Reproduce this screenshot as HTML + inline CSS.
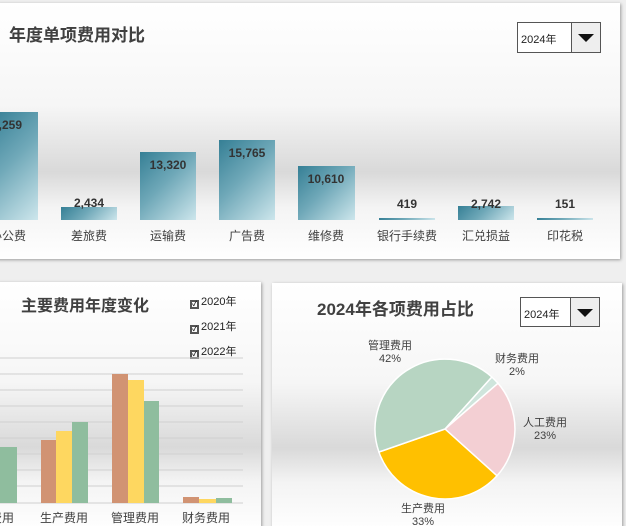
<!DOCTYPE html>
<html><head><meta charset="utf-8"><style>
*{margin:0;padding:0;box-sizing:border-box}
html,body{width:626px;height:526px;overflow:hidden}
body{background:#efefef;position:relative;font-family:"Liberation Sans","Noto Sans CJK SC",sans-serif;color:#404040}
.panel{position:absolute;background:linear-gradient(#fff 0%,#f6f6f6 40%,#d9d9d9 66%,#f4f4f4 80%,#fff 100%);box-shadow:1px 1px 3px rgba(0,0,0,.35)}
.t{position:absolute;font-weight:bold;color:#404040;white-space:nowrap}
.dd{position:absolute;background:#fff;border:1px solid #555;font-size:11px;color:#222}
.dd span{position:absolute;left:3px;top:8px}
.dd i{position:absolute;right:0;top:0;bottom:0;width:29px;border-left:1px solid #555;background:#eee}
.dd i:after{content:"";position:absolute;left:6px;top:11px;border-left:8px solid transparent;border-right:8px solid transparent;border-top:8px solid #111}
.bar{position:absolute;background:linear-gradient(135deg,#357f95 0%,#6fa8b8 45%,#cde6ec 100%)}
.v{position:absolute;font-size:12px;font-weight:bold;color:#333;width:60px;text-align:center;margin-left:-2px}
.l{position:absolute;font-size:12px;color:#404040;width:80px;text-align:center;white-space:nowrap}
.cb{position:absolute;font-size:11px;color:#222;white-space:nowrap}
.cb b{display:inline-block;width:9px;height:9px;border:2px solid #555;margin-right:2px;vertical-align:-1px;font-size:7px;line-height:5px;text-align:center}
</style></head><body>
<div class="panel" style="left:-4px;top:3px;width:624px;height:256px"></div>
<div class="t" style="left:9px;top:21px;font-size:17px">年度单项费用对比</div>
<div class="dd" style="left:517px;top:22px;width:84px;height:31px"><span>2024年</span><i></i></div>
<div class="bar" style="left:-10px;top:112px;width:48px;height:108px"></div><div class="v" style="left:-24px;top:118px">11,259</div>
<div class="bar" style="left:61px;top:207px;width:56px;height:13px"></div><div class="v" style="left:61px;top:196px">2,434</div>
<div class="bar" style="left:140px;top:152px;width:56px;height:68px"></div><div class="v" style="left:140px;top:158px">13,320</div>
<div class="bar" style="left:219px;top:140px;width:56px;height:80px"></div><div class="v" style="left:219px;top:146px">15,765</div>
<div class="bar" style="left:298px;top:166px;width:57px;height:54px"></div><div class="v" style="left:298px;top:172px">10,610</div>
<div class="bar" style="left:379px;top:218px;width:56px;height:2px"></div><div class="v" style="left:379px;top:197px">419</div>
<div class="bar" style="left:458px;top:206px;width:56px;height:14px"></div><div class="v" style="left:458px;top:197px">2,742</div>
<div class="bar" style="left:537px;top:218px;width:56px;height:2px"></div><div class="v" style="left:537px;top:197px">151</div>
<div class="l" style="left:-32px;top:227px">办公费</div>
<div class="l" style="left:49px;top:227px">差旅费</div>
<div class="l" style="left:128px;top:227px">运输费</div>
<div class="l" style="left:207px;top:227px">广告费</div>
<div class="l" style="left:286px;top:227px">维修费</div>
<div class="l" style="left:367px;top:227px">银行手续费</div>
<div class="l" style="left:446px;top:227px">汇兑损益</div>
<div class="l" style="left:525px;top:227px">印花税</div>

<div class="panel" style="left:-4px;top:282px;width:265px;height:250px"></div>
<div class="t" style="left:21px;top:292px;font-size:16px">主要费用年度变化</div>
<div class="cb" style="left:190px;top:293px"><b>✓</b>2020年</div>
<div class="cb" style="left:190px;top:318px"><b>✓</b>2021年</div>
<div class="cb" style="left:190px;top:343px"><b>✓</b>2022年</div>
<svg style="position:absolute;left:0;top:350px" width="260" height="160">
<g stroke="#d0d0d0" stroke-width="1">
<line x1="0" y1="8" x2="243" y2="8"/><line x1="0" y1="24" x2="243" y2="24"/><line x1="0" y1="40" x2="243" y2="40"/><line x1="0" y1="56" x2="243" y2="56"/><line x1="0" y1="72" x2="243" y2="72"/><line x1="0" y1="88" x2="243" y2="88"/><line x1="0" y1="104" x2="243" y2="104"/><line x1="0" y1="120" x2="243" y2="120"/><line x1="0" y1="136" x2="243" y2="136"/><line x1="0" y1="153" x2="243" y2="153"/></g>
<rect x="0" y="97" width="17" height="56" fill="#8fbd9e"/>
<rect x="41" y="90" width="15" height="63" fill="#d19373"/><rect x="56" y="81" width="16" height="72" fill="#fed760"/><rect x="72" y="72" width="16" height="81" fill="#8fbd9e"/>
<rect x="112" y="24" width="16" height="129" fill="#d19373"/><rect x="128" y="30" width="16" height="123" fill="#fed760"/><rect x="144" y="51" width="15" height="102" fill="#8fbd9e"/>
<rect x="183" y="147" width="16" height="6" fill="#d19373"/><rect x="199" y="149" width="17" height="4" fill="#fed760"/><rect x="216" y="148" width="16" height="5" fill="#8fbd9e"/>
</svg>
<div class="l" style="left:-50px;top:509px">销售费用</div>
<div class="l" style="left:24px;top:509px">生产费用</div>
<div class="l" style="left:95px;top:509px">管理费用</div>
<div class="l" style="left:166px;top:509px">财务费用</div>

<div class="panel" style="left:272px;top:283px;width:350px;height:250px"></div>
<div class="t" style="left:317px;top:295px;font-size:17px">2024年各项费用占比</div>
<div class="dd" style="left:520px;top:297px;width:80px;height:30px"><span>2024年</span><i></i></div>
<svg style="position:absolute;left:0;top:0" width="626" height="526">
<g stroke="#fff" stroke-width="1.5">
<path d="M445 429 L491.8 377 A70 70 0 0 1 498 383.3Z" fill="#cfe5dc"/>
<path d="M445 429 L498 383.3 A70 70 0 0 1 497 475.8Z" fill="#f3cfd3"/>
<path d="M445 429 L497 475.8 A70 70 0 0 1 378.9 452Z" fill="#ffc000"/>
<path d="M445 429 L378.9 452 A70 70 0 0 1 491.8 377Z" fill="#b7d5c2"/>
</g></svg>
<div class="l" style="left:350px;top:340px;font-size:11px;line-height:13px">管理费用<br>42%</div>
<div class="l" style="left:477px;top:353px;font-size:11px;line-height:13px">财务费用<br>2%</div>
<div class="l" style="left:505px;top:417px;font-size:11px;line-height:13px">人工费用<br>23%</div>
<div class="l" style="left:383px;top:503px;font-size:11px;line-height:13px">生产费用<br>33%</div>
</body></html>
